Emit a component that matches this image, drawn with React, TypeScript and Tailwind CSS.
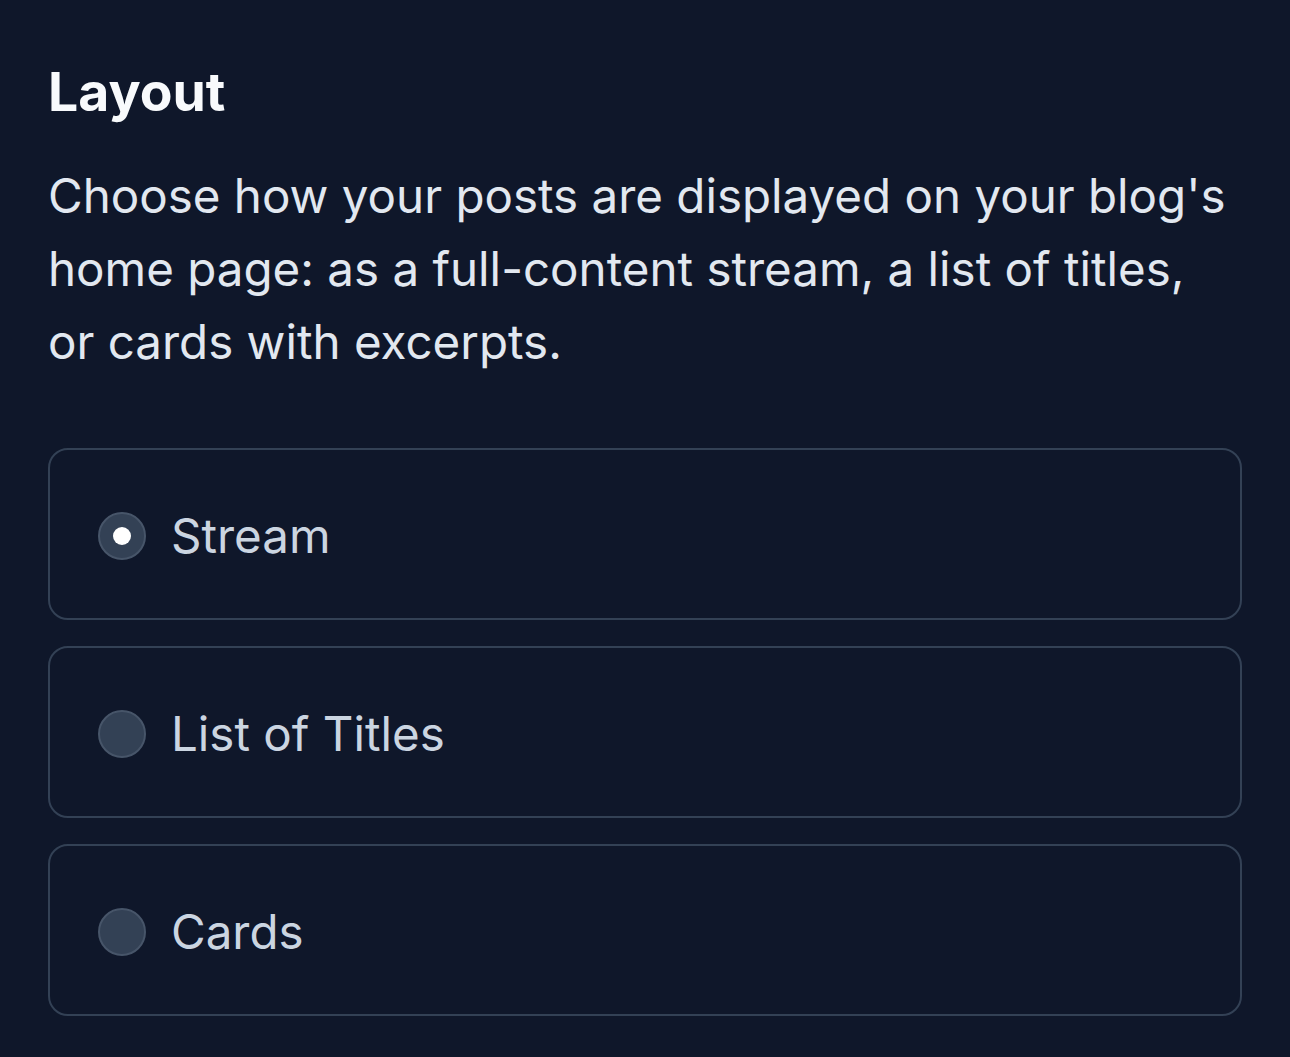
import React, { useState } from "react";

const options = ["Stream", "List of Titles", "Cards"];

export default function App() {
  const [selected, setSelected] = useState("Stream");
  return (
    <div
      className="min-h-[1057px] w-full bg-[#0f172a] px-[48px] pt-[59px]"
      style={{ fontFamily: "Inter, 'Noto Sans', sans-serif" }}
    >
      <h2 className="text-[53.5px] font-bold leading-[66px] text-[#f8fafc]">Layout</h2>
      <p className="mt-[34px] text-[47.5px] leading-[73px] text-[#e2e8f0]">
        Choose how your posts are displayed on your blog's home page: as a full-content stream, a list of titles, or cards with excerpts.
      </p>
      <div className="mt-[70px] flex flex-col gap-[26px]">
        {options.map((o) => {
          const active = o === selected;
          return (
            <label
              key={o}
              onClick={() => setSelected(o)}
              className="flex cursor-pointer items-center gap-[25px] rounded-[20px] border-2 border-[#334155] px-[48px] pt-[50px] pb-[46px]"
            >
              <span className="flex h-[48px] w-[48px] shrink-0 items-center justify-center rounded-full border-2 border-[#475569] bg-[#334155]">
                {active && <span className="h-[18px] w-[18px] rounded-full bg-white" />}
              </span>
              <span className="text-[47.5px] leading-[72px] text-[#cbd5e1]">{o}</span>
            </label>
          );
        })}
      </div>
    </div>
  );
}
